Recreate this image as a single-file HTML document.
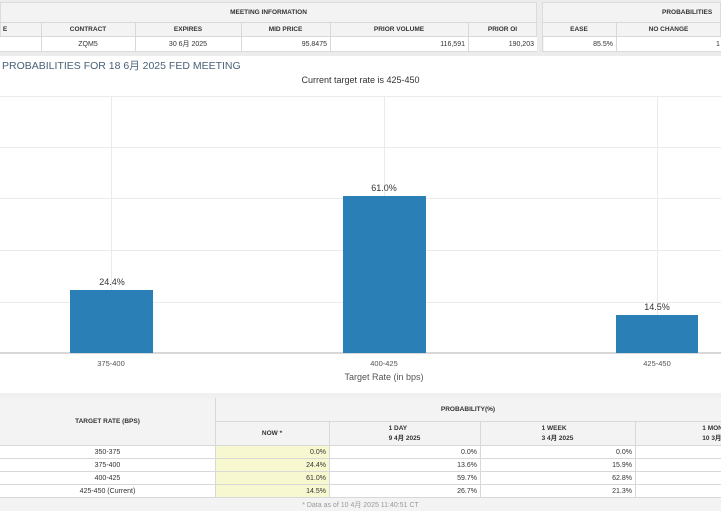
<!DOCTYPE html>
<html><head><meta charset="utf-8"><style>
*{margin:0;padding:0;box-sizing:border-box}
body{width:721px;height:511px;overflow:hidden;background:#fff;font-family:"Liberation Sans","Noto Sans CJK SC",sans-serif;position:relative}
.a{position:absolute}
.c{position:absolute;font-size:7px;color:#333;display:flex;align-items:center}
.h{font-weight:bold;justify-content:center;font-size:6.5px}
.r{justify-content:flex-end;padding-right:3px}
.m{justify-content:center}
</style></head><body>
<div class="a" style="left:0;top:0;width:721px;height:56px;background:#ececec"></div>
<div class="a" style="left:0;top:2px;width:537px;height:50px;background:#f3f3f3;border:1px solid #dcdcdc"></div>
<div class="a" style="left:542px;top:2px;width:179px;height:50px;background:#f3f3f3;border:1px solid #dcdcdc"></div>
<div class="c h" style="left:0;top:2px;width:537px;height:20px">MEETING INFORMATION</div>
<div class="c h" style="left:542px;top:2px;width:179px;height:20px;padding-left:120px;justify-content:flex-start">PROBABILITIES</div>
<div class="a" style="left:0;top:22px;width:537px;height:1px;background:#d8d8d8"></div>
<div class="a" style="left:542px;top:22px;width:179px;height:1px;background:#d8d8d8"></div>
<div class="a" style="left:0;top:37px;width:537px;height:14px;background:#fff"></div>
<div class="a" style="left:544px;top:37px;width:177px;height:14px;background:#fff"></div>
<div class="a" style="left:0;top:36px;width:537px;height:1px;background:#d8d8d8"></div>
<div class="a" style="left:542px;top:36px;width:179px;height:1px;background:#d8d8d8"></div>
<div class="a" style="left:41px;top:22px;width:1px;height:29px;background:#d8d8d8"></div>
<div class="a" style="left:135px;top:22px;width:1px;height:29px;background:#d8d8d8"></div>
<div class="a" style="left:241px;top:22px;width:1px;height:29px;background:#d8d8d8"></div>
<div class="a" style="left:330px;top:22px;width:1px;height:29px;background:#d8d8d8"></div>
<div class="a" style="left:468px;top:22px;width:1px;height:29px;background:#d8d8d8"></div>
<div class="a" style="left:616px;top:22px;width:1px;height:29px;background:#d8d8d8"></div>
<div class="c h" style="left:0;top:22px;width:10px;height:14px">E</div>
<div class="c h" style="left:41px;top:22px;width:94px;height:14px">CONTRACT</div>
<div class="c h" style="left:135px;top:22px;width:106px;height:14px">EXPIRES</div>
<div class="c h" style="left:241px;top:22px;width:89px;height:14px">MID PRICE</div>
<div class="c h" style="left:330px;top:22px;width:138px;height:14px">PRIOR VOLUME</div>
<div class="c h" style="left:468px;top:22px;width:69px;height:14px">PRIOR OI</div>
<div class="c h" style="left:542px;top:22px;width:74px;height:14px">EASE</div>
<div class="c h" style="left:616px;top:22px;width:105px;height:14px">NO CHANGE</div>
<div class="c m" style="left:41px;top:37px;width:94px;height:14px">ZQM5</div>
<div class="c m" style="left:135px;top:37px;width:106px;height:14px">30 6月 2025</div>
<div class="c r" style="left:241px;top:37px;width:89px;height:14px">95.8475</div>
<div class="c r" style="left:330px;top:37px;width:138px;height:14px">116,591</div>
<div class="c r" style="left:468px;top:37px;width:69px;height:14px">190,203</div>
<div class="c r" style="left:542px;top:37px;width:74px;height:14px">85.5%</div>
<div class="c" style="left:716px;top:37px;width:5px;height:14px">1</div>
<div class="a" style="left:2px;top:58px;font-size:10.5px;color:#4a6077;white-space:nowrap">PROBABILITIES FOR 18 6月 2025 FED MEETING</div>
<div class="a" style="left:0;top:75px;width:721px;text-align:center;font-size:9px;color:#333">Current target rate is 425-450</div>
<svg class="a" style="left:0;top:90px" width="721" height="300">
<g stroke="#ebebeb" stroke-width="1">
<line x1="0" y1="6.5" x2="721" y2="6.5"/><line x1="0" y1="57.5" x2="721" y2="57.5"/><line x1="0" y1="108.5" x2="721" y2="108.5"/><line x1="0" y1="160.5" x2="721" y2="160.5"/><line x1="0" y1="212.5" x2="721" y2="212.5"/>
<line x1="111.5" y1="6" x2="111.5" y2="263"/><line x1="384.5" y1="6" x2="384.5" y2="263"/><line x1="657.5" y1="6" x2="657.5" y2="263"/>
</g>
<line x1="0" y1="263" x2="721" y2="263" stroke="#ccc" stroke-width="1.5"/>
<rect x="70" y="200" width="83" height="63" fill="#2a7fb7"/>
<rect x="343" y="106" width="83" height="157" fill="#2a7fb7"/>
<rect x="616" y="225" width="82" height="38" fill="#2a7fb7"/>
<g font-family="Liberation Sans,sans-serif" font-size="9" fill="#333" text-anchor="middle">
<text x="112" y="195">24.4%</text><text x="384" y="101">61.0%</text><text x="657" y="220">14.5%</text>
</g>
<g font-family="Liberation Sans,sans-serif" font-size="7.5" fill="#555" text-anchor="middle">
<text x="111" y="276">375-400</text><text x="384" y="276">400-425</text><text x="657" y="276">425-450</text>
<text x="384" y="290" font-size="9">Target Rate (in bps)</text>
</g>
</svg>
<div class="a" style="left:0;top:393px;width:721px;height:5px;background:#f0f0f0"></div>
<div class="a" style="left:0;top:398px;width:721px;height:113px;background:#f3f3f3"></div>
<div class="a" style="left:215px;top:398px;width:1px;height:100px;background:#d8d8d8"></div>
<div class="a" style="left:215px;top:421px;width:506px;height:1px;background:#d8d8d8"></div>
<div class="c h" style="left:0;top:398px;width:215px;height:47px">TARGET RATE (BPS)</div>
<div class="c h" style="left:215px;top:398px;width:506px;height:23px">PROBABILITY(%)</div>
<div class="c h" style="left:215px;top:422px;width:114px;height:23px">NOW *</div>
<div class="c h" style="left:329px;top:422px;width:151px;height:23px;flex-direction:column">1 DAY<br>9 4月 2025</div>
<div class="c h" style="left:480px;top:422px;width:155px;height:23px;flex-direction:column">1 WEEK<br>3 4月 2025</div>
<div class="c h" style="left:635px;top:422px;width:170px;height:23px;flex-direction:column">1 MONTH<br>10 3月 2025</div>
<div class="a" style="left:329px;top:422px;width:1px;height:76px;background:#d8d8d8"></div>
<div class="a" style="left:480px;top:422px;width:1px;height:76px;background:#d8d8d8"></div>
<div class="a" style="left:635px;top:422px;width:1px;height:76px;background:#d8d8d8"></div>
<div class="a" style="left:0;top:445px;width:721px;height:53px;background:#fff"></div>
<div class="a" style="left:216px;top:445px;width:113px;height:53px;background:#f8f8d0"></div>
<div class="a" style="left:0;top:445px;width:721px;height:1px;background:#d8d8d8"></div>
<div class="a" style="left:0;top:458px;width:721px;height:1px;background:#d8d8d8"></div>
<div class="a" style="left:0;top:471px;width:721px;height:1px;background:#d8d8d8"></div>
<div class="a" style="left:0;top:484px;width:721px;height:1px;background:#d8d8d8"></div>
<div class="a" style="left:0;top:497px;width:721px;height:1px;background:#d8d8d8"></div>
<div class="a" style="left:215px;top:445px;width:1px;height:53px;background:#d8d8d8"></div>
<div class="a" style="left:329px;top:445px;width:1px;height:53px;background:#d8d8d8"></div>
<div class="a" style="left:480px;top:445px;width:1px;height:53px;background:#d8d8d8"></div>
<div class="a" style="left:635px;top:445px;width:1px;height:53px;background:#d8d8d8"></div>
<div class="c m" style="left:0;top:446px;width:215px;height:12px">350-375</div>
<div class="c m" style="left:0;top:459px;width:215px;height:12px">375-400</div>
<div class="c m" style="left:0;top:472px;width:215px;height:12px">400-425</div>
<div class="c m" style="left:0;top:485px;width:215px;height:12px">425-450 (Current)</div>
<div class="c r" style="left:215px;top:446px;width:114px;height:12px">0.0%</div>
<div class="c r" style="left:215px;top:459px;width:114px;height:12px">24.4%</div>
<div class="c r" style="left:215px;top:472px;width:114px;height:12px">61.0%</div>
<div class="c r" style="left:215px;top:485px;width:114px;height:12px">14.5%</div>
<div class="c r" style="left:329px;top:446px;width:151px;height:12px">0.0%</div>
<div class="c r" style="left:329px;top:459px;width:151px;height:12px">13.6%</div>
<div class="c r" style="left:329px;top:472px;width:151px;height:12px">59.7%</div>
<div class="c r" style="left:329px;top:485px;width:151px;height:12px">26.7%</div>
<div class="c r" style="left:480px;top:446px;width:155px;height:12px">0.0%</div>
<div class="c r" style="left:480px;top:459px;width:155px;height:12px">15.9%</div>
<div class="c r" style="left:480px;top:472px;width:155px;height:12px">62.8%</div>
<div class="c r" style="left:480px;top:485px;width:155px;height:12px">21.3%</div>
<div class="c m" style="left:0;top:499px;width:721px;height:12px;color:#999">* Data as of 10 4月 2025 11:40:51 CT</div>
</body></html>
